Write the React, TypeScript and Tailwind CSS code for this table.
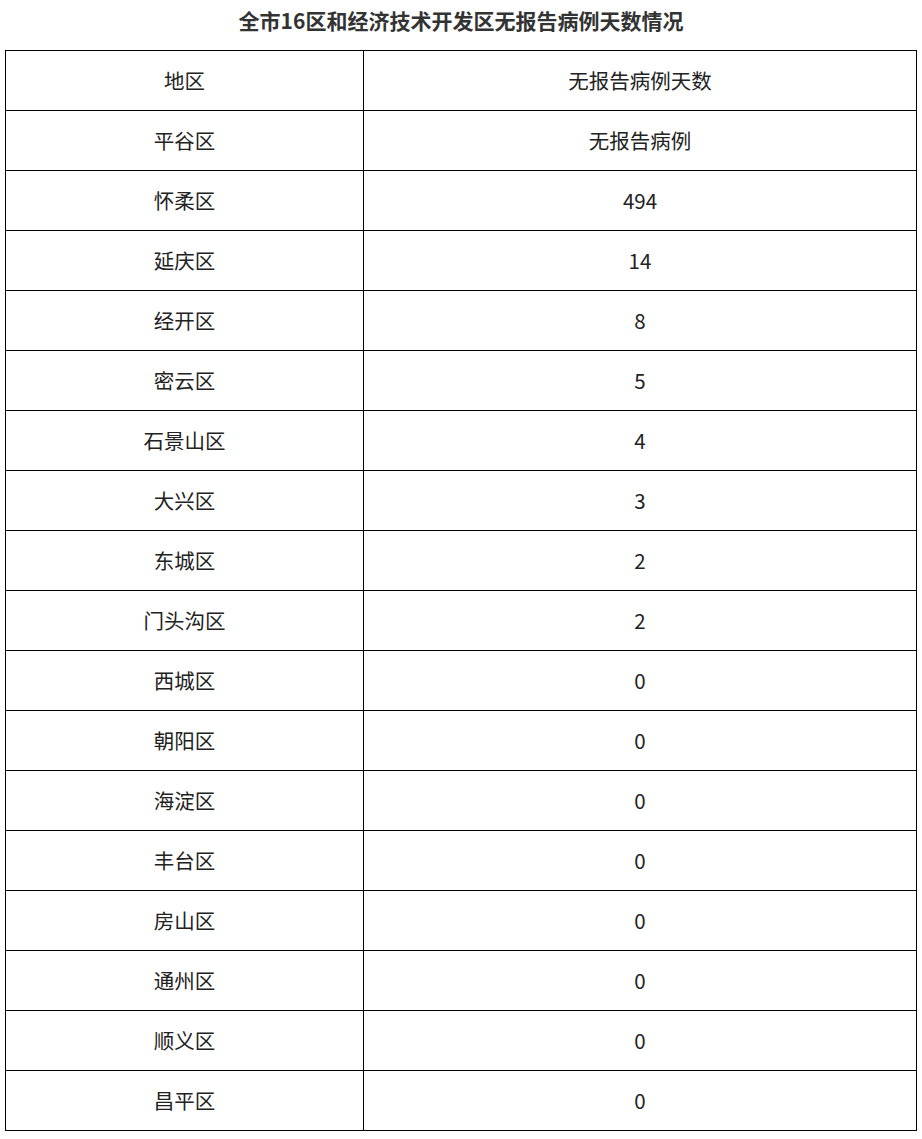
const rows: [string, string][] = [
  ['平谷区', '无报告病例'],
  ['怀柔区', '494'],
  ['延庆区', '14'],
  ['经开区', '8'],
  ['密云区', '5'],
  ['石景山区', '4'],
  ['大兴区', '3'],
  ['东城区', '2'],
  ['门头沟区', '2'],
  ['西城区', '0'],
  ['朝阳区', '0'],
  ['海淀区', '0'],
  ['丰台区', '0'],
  ['房山区', '0'],
  ['通州区', '0'],
  ['顺义区', '0'],
  ['昌平区', '0'],
];

const App: React.FC = () => {
  return (
    <div className="w-[922px] bg-white font-['Microsoft_YaHei','Noto_Sans_CJK_SC',sans-serif] text-[#222]">
      <div className="h-[50px] pt-[7px] text-center text-[21px] font-bold leading-[26px] text-[#333]">
        全市16区和经济技术开发区无报告病例天数情况
      </div>

      <table className="ml-[5px] w-[912px] border-collapse text-[20.5px]">
        <tbody>
          <tr className="h-[60px]">
            <td className="w-[358px] border border-black text-center">地区</td>
            <td className="border border-black text-center">无报告病例天数</td>
          </tr>
          {rows.map(([area, days]) => (
            <tr key={area} className="h-[60px]">
              <td className="border border-black text-center">{area}</td>
              <td className="border border-black text-center">{days}</td>
            </tr>
          ))}
        </tbody>
      </table>
    </div>
  );
};

export default App;
